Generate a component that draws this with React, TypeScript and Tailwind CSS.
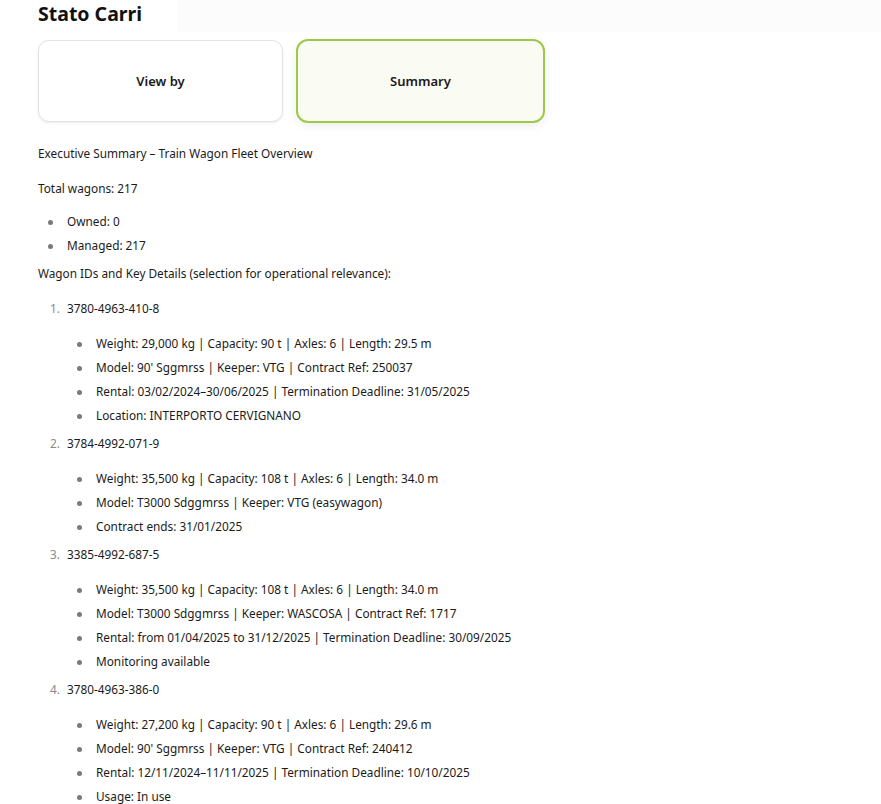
import React from "react";

const font = { fontFamily: '"Noto Sans", "Segoe UI", sans-serif' };

type Wagon = { id: string; details: string[] };

const wagons: Wagon[] = [
  {
    id: "3780-4963-410-8",
    details: [
      "Weight: 29,000 kg | Capacity: 90 t | Axles: 6 | Length: 29.5 m",
      "Model: 90' Sggmrss | Keeper: VTG | Contract Ref: 250037",
      "Rental: 03/02/2024–30/06/2025 | Termination Deadline: 31/05/2025",
      "Location: INTERPORTO CERVIGNANO",
    ],
  },
  {
    id: "3784-4992-071-9",
    details: [
      "Weight: 35,500 kg | Capacity: 108 t | Axles: 6 | Length: 34.0 m",
      "Model: T3000 Sdggmrss | Keeper: VTG (easywagon)",
      "Contract ends: 31/01/2025",
    ],
  },
  {
    id: "3385-4992-687-5",
    details: [
      "Weight: 35,500 kg | Capacity: 108 t | Axles: 6 | Length: 34.0 m",
      "Model: T3000 Sdggmrss | Keeper: WASCOSA | Contract Ref: 1717",
      "Rental: from 01/04/2025 to 31/12/2025 | Termination Deadline: 30/09/2025",
      "Monitoring available",
    ],
  },
  {
    id: "3780-4963-386-0",
    details: [
      "Weight: 27,200 kg | Capacity: 90 t | Axles: 6 | Length: 29.6 m",
      "Model: 90' Sggmrss | Keeper: VTG | Contract Ref: 240412",
      "Rental: 12/11/2024–11/11/2025 | Termination Deadline: 10/10/2025",
      "Usage: In use",
    ],
  },
];

function Bullet({ children, indent }: { children: React.ReactNode; indent: "one" | "two" }) {
  return (
    <li className={`flex h-[24px] items-center ${indent === "one" ? "pl-[10px]" : "pl-[39px]"}`}>
      <span className="flex w-[19px] items-center">
        <span className="block h-[5px] w-[5px] rounded-full bg-[#7a7a7a]" />
      </span>
      <span>{children}</span>
    </li>
  );
}

export default function App() {
  return (
    <div className="min-h-[804px] w-[881px] bg-white text-[11.8px] text-[#1b1b1b]" style={font}>
      <div className="flex h-[32px] items-start">
        <h1 className="ml-[38px] w-[139px] text-[19.5px] font-bold leading-[28px] text-[#111]">Stato Carri</h1>
        <div className="h-[32px] flex-1 bg-[#fcfcfc]" />
      </div>

      <div className="ml-[38px] mt-[7px] flex items-center gap-[13px]">
        <div className="flex h-[82px] w-[245px] items-center justify-center rounded-[11px] border border-[#e4e4e4] bg-white pt-[1px] text-[13px] font-semibold text-[#1a1a1a] shadow-[0_1px_3px_rgba(0,0,0,0.08)]">
          View by
        </div>
        <div className="flex h-[84px] w-[249px] items-center justify-center rounded-[12px] border-2 border-[#9cc947] bg-[#fafbf2] pt-[1px] text-[13px] font-semibold text-[#1a1a1a] shadow-[0_3px_10px_rgba(0,0,0,0.07)]">
          Summary
        </div>
      </div>

      <div className="ml-[38px] mt-[18px]">
        <p className="h-[24px] leading-[24px]">Executive Summary – Train Wagon Fleet Overview</p>
        <p className="mt-[11px] h-[24px] leading-[24px]">Total wagons: 217</p>
        <ul className="mt-[10px]">
          <Bullet indent="one">Owned: 0</Bullet>
          <Bullet indent="one">Managed: 217</Bullet>
        </ul>
        <p className="mt-[3px] h-[24px] leading-[24px]">Wagon IDs and Key Details (selection for operational relevance):</p>
        <ol className="mt-[12px]">
          {wagons.map((w, i) => (
            <li key={w.id} className={i > 0 ? "mt-[4px]" : ""}>
              <div className="flex h-[24px] items-center pl-[12px]">
                <span className="w-[17px] text-[#8a8a8a]">{i + 1}.</span>
                <span>{w.id}</span>
              </div>
              <ul className="mt-[11px]">
                {w.details.map((d) => (
                  <Bullet key={d} indent="two">
                    {d}
                  </Bullet>
                ))}
              </ul>
            </li>
          ))}
        </ol>
      </div>
    </div>
  );
}
